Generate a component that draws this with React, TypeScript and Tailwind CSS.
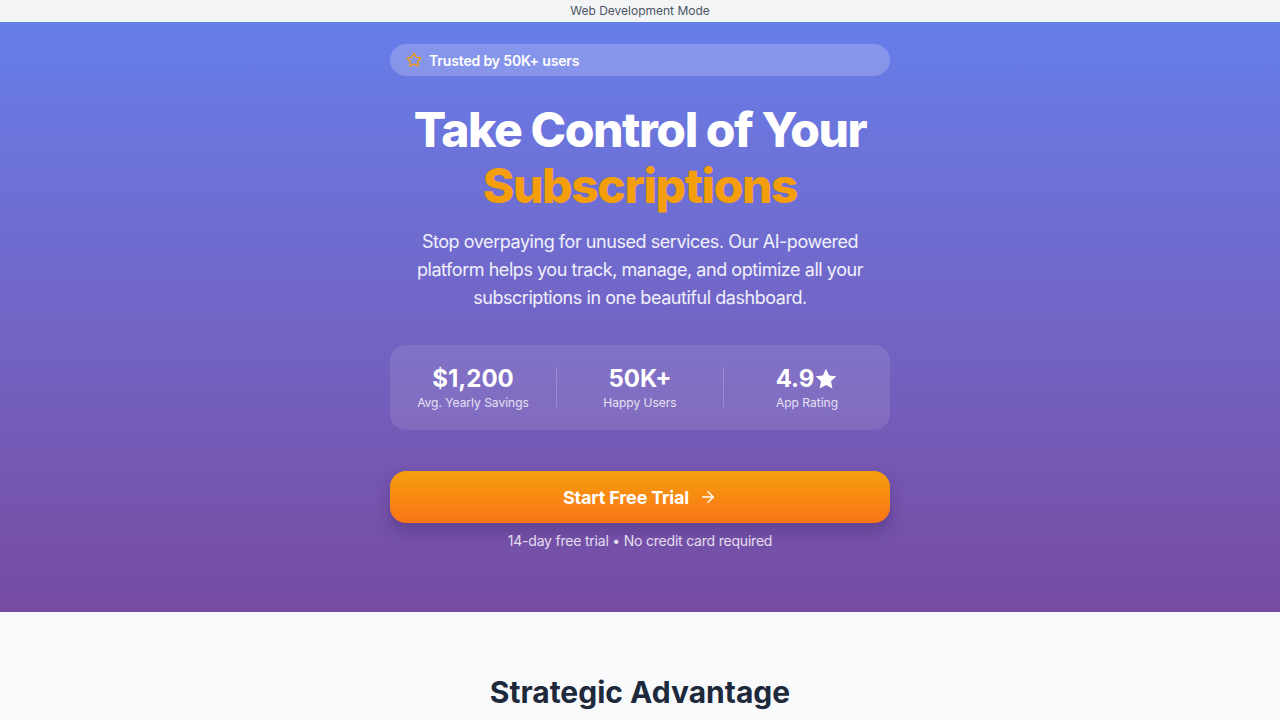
import React from "react";

function StarOutline({ className }: { className?: string }) {
  return (
    <svg viewBox="0 0 24 24" className={className} fill="none" stroke="currentColor" strokeWidth={2} strokeLinecap="round" strokeLinejoin="round">
      <path d="M11.525 2.295a.53.53 0 0 1 .95 0l2.31 4.679a2.123 2.123 0 0 0 1.595 1.16l5.166.756a.53.53 0 0 1 .294.904l-3.736 3.638a2.123 2.123 0 0 0-.611 1.878l.882 5.14a.53.53 0 0 1-.771.56l-4.618-2.428a2.122 2.122 0 0 0-1.973 0L6.396 21.01a.53.53 0 0 1-.77-.56l.881-5.139a2.122 2.122 0 0 0-.611-1.879L2.16 9.795a.53.53 0 0 1 .294-.906l5.165-.755a2.122 2.122 0 0 0 1.597-1.16z" />
    </svg>
  );
}

function StarFilled({ className }: { className?: string }) {
  return (
    <svg viewBox="0 0 24 24" className={className} fill="currentColor">
      <path d="M12 1.8l3.1 6.6 7.2.9-5.3 5 1.4 7.2L12 18l-6.4 3.5L7 14.3l-5.3-5 7.2-.9z" />
    </svg>
  );
}

function Arrow({ className }: { className?: string }) {
  return (
    <svg viewBox="0 0 24 24" className={className} fill="none" stroke="currentColor" strokeWidth={2} strokeLinecap="round" strokeLinejoin="round">
      <path d="M5 12h14" />
      <path d="m12 5 7 7-7 7" />
    </svg>
  );
}

export default function App() {
  const font = { fontFamily: "Inter, 'Noto Sans', 'Liberation Sans', sans-serif" };
  return (
    <div className="min-h-screen bg-[#f8fafc]" style={font}>
      <div className="h-[22px] bg-[#f3f4f6] flex items-center justify-center text-[12px] text-[#4b5563]">
        Web Development Mode
      </div>
      <section className="bg-gradient-to-b from-[#667eea] to-[#764ba2] pt-[22px] pb-[61px] flex flex-col items-center">
        <div className="w-[500px] flex flex-col items-center">
          <div className="w-full h-8 rounded-full bg-white/20 flex items-center gap-[7px] px-4">
            <StarOutline className="w-4 h-4 text-[#f59e0b]" />
            <span className="text-[14px] font-semibold text-white tracking-[-0.01em]">Trusted by 50K+ users</span>
          </div>
          <h1 className="mt-[26px] text-[48px] leading-[56px] font-extrabold text-center text-white tracking-[-0.03em]">
            Take Control of Your
            <br />
            <span className="text-[#f59e0b]">Subscriptions</span>
          </h1>
          <p className="mt-[14px] w-[480px] text-[18px] leading-[28px] text-center text-white/90 tracking-[-0.025em]">
            Stop overpaying for unused services. Our AI-powered
            <br />
            platform helps you track, manage, and optimize all your
            <br />
            subscriptions in one beautiful dashboard.
          </p>
          <div className="mt-[33px] w-full rounded-2xl bg-white/10 pt-[18px] pb-[19px] flex items-center">
            <div className="flex-1 flex flex-col items-center">
              <div className="text-[24px] leading-[32px] font-bold text-white">$1,200</div>
              <div className="text-[12px] leading-[16px] text-white/80">Avg. Yearly Savings</div>
            </div>
            <div className="w-px h-10 bg-white/20" />
            <div className="flex-1 flex flex-col items-center">
              <div className="text-[24px] leading-[32px] font-bold text-white">50K+</div>
              <div className="text-[12px] leading-[16px] text-white/80">Happy Users</div>
            </div>
            <div className="w-px h-10 bg-white/20" />
            <div className="flex-1 flex flex-col items-center">
              <div className="text-[24px] leading-[32px] font-bold text-white flex items-center">
                4.9<StarFilled className="w-6 h-6" />
              </div>
              <div className="text-[12px] leading-[16px] text-white/80">App Rating</div>
            </div>
          </div>
          <button className="mt-[41px] w-full h-[52px] rounded-2xl bg-gradient-to-b from-[#f59e0b] to-[#f97316] shadow-[0_8px_16px_rgba(60,30,90,0.35)] flex items-center justify-center gap-[10px] text-white text-[18px] font-bold tracking-[-0.01em]">
            Start Free Trial
            <Arrow className="w-[18px] h-[18px]" />
          </button>
          <div className="mt-2 text-[14px] leading-[20px] text-white/80 tracking-[-0.015em]">
            14-day free trial • No credit card required
          </div>
        </div>
      </section>
      <section className="pt-[62px] flex justify-center">
        <h2 className="text-[30px] leading-[36px] font-bold text-[#1e293b]">Strategic Advantage</h2>
      </section>
    </div>
  );
}
